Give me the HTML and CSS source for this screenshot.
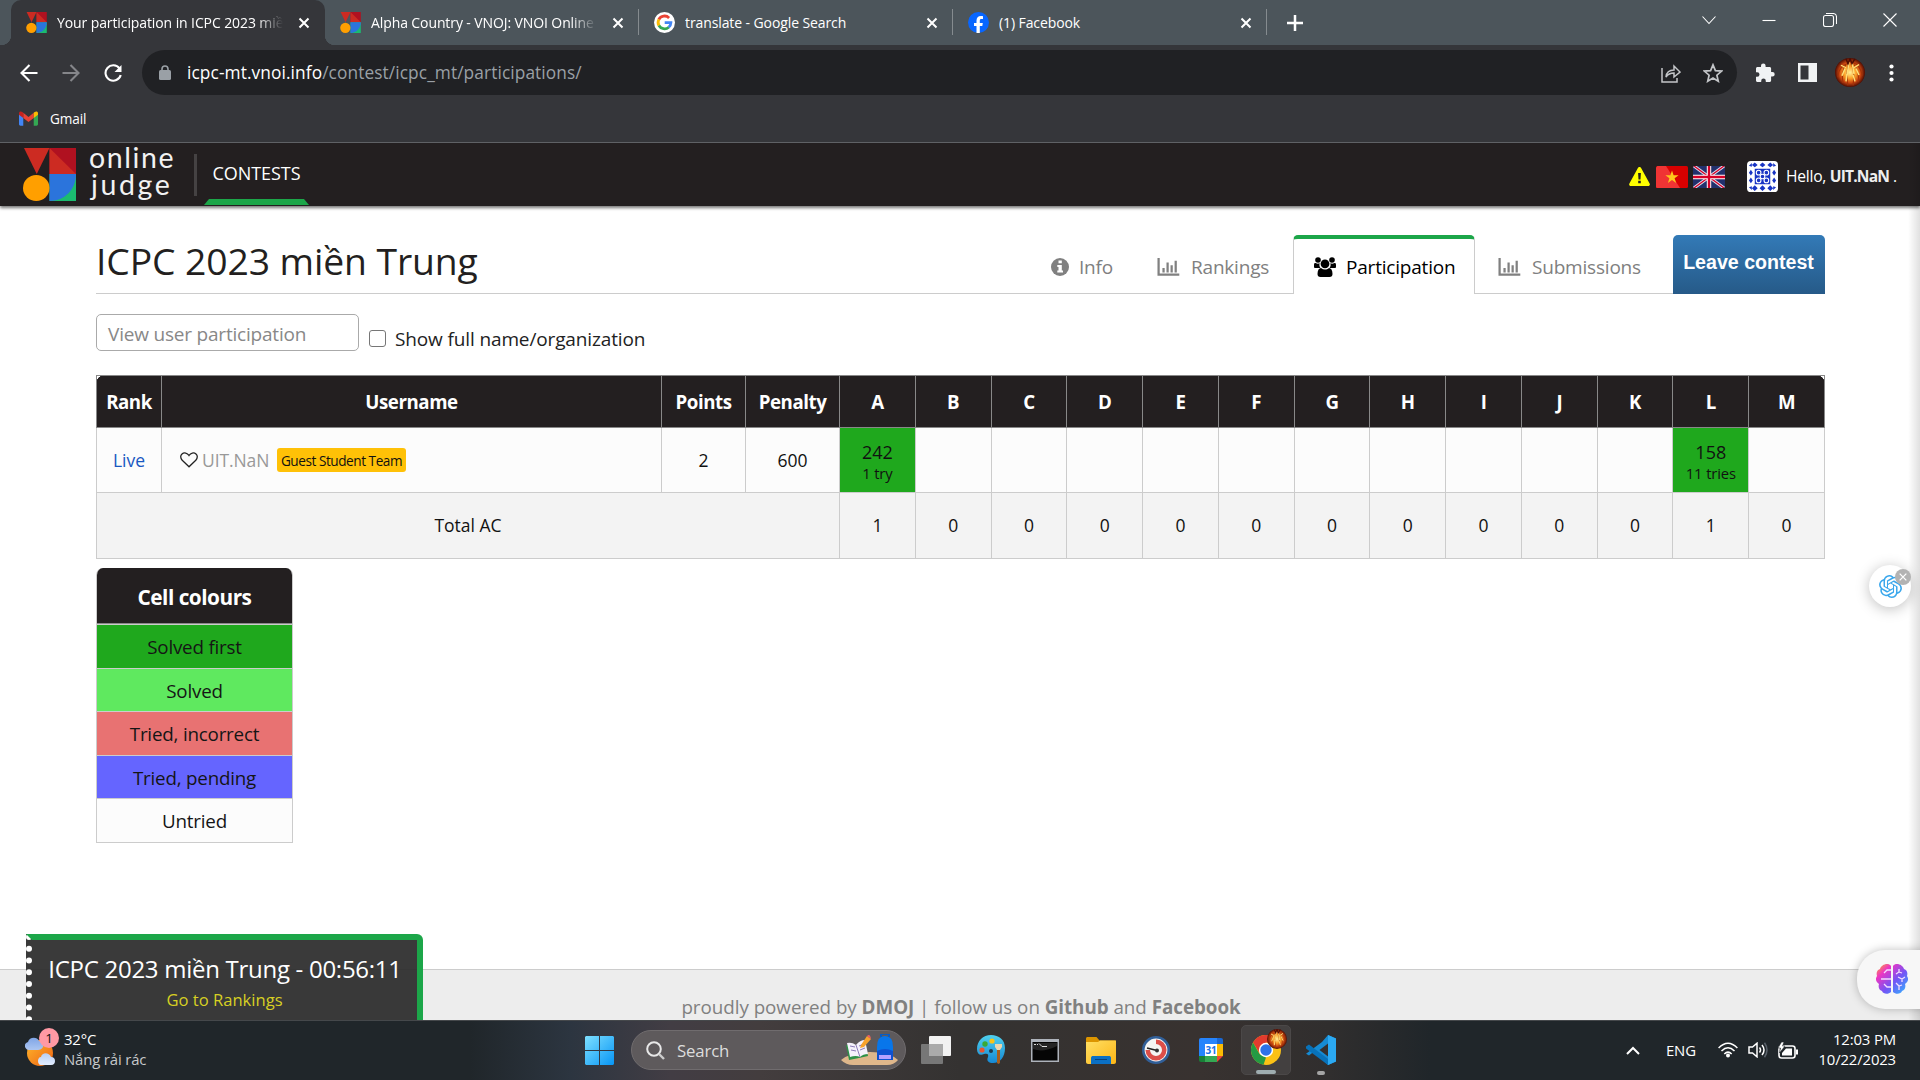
FILE: index.html
```html
<!DOCTYPE html>
<html lang="en">
<head>
<meta charset="utf-8">
<title>Your participation in ICPC 2023 miền Trung</title>
<link rel="stylesheet" href="styles.css">
</head>
<body>
<svg width="0" height="0" class="defs">
  <defs>
    <symbol id="vnoj" viewBox="0 0 52 53"><path d="M1 0h25L13.500 26z" fill="#cc2b22"/><path d="M26 0h26v26H26z" fill="#b01120"/><path d="M26 0l26 26H26z" fill="#cc2b22"/><path d="M26 26h26v27H26z" fill="#1bbb70"/><path d="M26 26h26c0 15-11 27-26 27z" fill="#2b74dc"/><circle cx="13" cy="40" r="13" fill="#ff9f00"/></symbol>
    <symbol id="close" viewBox="0 0 12 12"><path d="M1.500 1.500l9 9m0-9l-9 9" stroke="currentColor" stroke-width="2"/></symbol>
    <symbol id="bars" viewBox="0 0 24 20"><path d="M1 0v18.500h23M6.500 16v-5M11 16V5m4.500 11V8M20 16V3" fill="none" stroke="currentColor" stroke-width="2.500"/></symbol>
    <radialGradient id="fire"><stop offset="0" stop-color="#fff09a"/><stop offset=".4" stop-color="#fca329"/><stop offset=".72" stop-color="#c94510"/><stop offset="1" stop-color="#4e0d03"/></radialGradient>
    <symbol id="flame" viewBox="0 0 30 36"><ellipse cx="15" cy="18" rx="15" ry="18" fill="url(#fire)"/><path d="M14 6Q3 10 3 24M11 8Q6 17 8 31M13 10q-2 12 0 24M17 9q3 12 1 25M19 8q6 10 4 22M17 5q9 4 10 17" fill="none" stroke="#a33409" stroke-width="1.100"/><path d="M6 9l5 3m13-4l-5 4M14 5l-2 17M17 5l2 15M10 13l-3 9m14-9l3 8M12 20l-1 9m7-8l2 8" fill="none" stroke="#ffe078" stroke-width="1.500"/><path d="M11 1l2 6 2-6 2 6 3-6" fill="none" stroke="#4e0d03" stroke-width="1.600"/></symbol>
    <linearGradient id="win" x2="1" y2="1"><stop stop-color="#7ee0ff"/><stop offset="1" stop-color="#0795f5"/></linearGradient>
    <linearGradient id="brain" x1="0" y1="0" x2="1" y2="1"><stop stop-color="#ffb11c"/><stop offset=".25" stop-color="#ed36c3"/><stop offset=".58" stop-color="#7454f5"/><stop offset="1" stop-color="#2dbdff"/></linearGradient>
    <linearGradient id="sun" x2="1" y2="1"><stop stop-color="#ffb92c"/><stop offset="1" stop-color="#ee6212"/></linearGradient>
    <linearGradient id="cloud" x2="0" y2="1"><stop stop-color="#7fa5e6"/><stop offset="1" stop-color="#e2edff"/></linearGradient>
    <linearGradient id="folder" x2="1" y2="1"><stop stop-color="#ffdf64"/><stop offset="1" stop-color="#fcb616"/></linearGradient>
    <linearGradient id="paint" x2="0" y2="1"><stop stop-color="#4fd0ed"/><stop offset="1" stop-color="#1689d4"/></linearGradient>
  </defs>
</svg>

<header class="tabstrip">
  <div class="tab tab-active"><svg class="favicon"><use href="#vnoj"/></svg><span class="tab-title fade">Your participation in ICPC 2023 miền</span><svg class="tab-close"><use href="#close"/></svg></div>
  <div class="tab"><svg class="favicon"><use href="#vnoj"/></svg><span class="tab-title fade">Alpha Country - VNOJ: VNOI Online</span><svg class="tab-close"><use href="#close"/></svg></div>
  <div class="tab"><svg class="favicon" viewBox="0 0 21 21"><circle cx="10.500" cy="10.500" r="10.500" fill="#fff"/><g fill="none" stroke-width="2.800"><path d="M4.800 7.500a6.500 6.500 0 0 1 10.300-1.600" stroke="#ea4335"/><path d="M4.900 7.400a6.500 6.500 0 0 0 0 6.200" stroke="#fbbc05"/><path d="M4.900 13.500a6.500 6.500 0 0 0 9.900 1.800" stroke="#34a853"/><path d="M14.700 15.300a6.500 6.500 0 0 0 2.200-4.600h-6.200" stroke="#4285f4"/></g></svg><span class="tab-title">translate - Google Search</span><svg class="tab-close"><use href="#close"/></svg></div>
  <div class="tab"><svg class="favicon" viewBox="0 0 21 21"><circle cx="10.500" cy="10.500" r="10.500" fill="#0866ff"/><path d="M8.500 21v-7H6v-3h2.500V8.800C8.500 5.600 10 4 13 4c.8 0 1.500.1 2 .2v2.900h-1.500c-1.300 0-1.700.6-1.700 1.800V11h3l-.5 3h-2.500v7z" fill="#fff"/></svg><span class="tab-title">(1) Facebook</span><svg class="tab-close"><use href="#close"/></svg></div>
  <svg class="new-tab" viewBox="0 0 16 16"><path d="M8 0v16M0 8h16" stroke="#fff" stroke-width="2.500"/></svg>
  <div class="window-buttons">
    <svg viewBox="0 0 14 14"><path d="M.5 3.500l6.500 7 6.500-7"/></svg>
    <svg viewBox="0 0 14 14"><path d="M.5 7.500h13"/></svg>
    <svg viewBox="0 0 14 14"><rect x=".5" y="2.500" width="10" height="11" rx="2"/><path d="M3 .5h7a3.500 3.500 0 0 1 3.500 3.500v7"/></svg>
    <svg viewBox="0 0 14 14"><path d="M.5.500l13 13m0-13l-13 13"/></svg>
  </div>
</header>

<div class="toolbar">
  <svg class="nav-icon" viewBox="0 0 18 18"><path d="M17.500 9H1.500M9.500 1L1.500 9l8 8"/></svg>
  <svg class="nav-icon dim" viewBox="0 0 18 18"><path d="M.5 9h16M8.500 1l8 8-8 8"/></svg>
  <svg class="nav-icon" viewBox="0 0 18 18"><path d="M15.500 4.500A7.700 7.700 0 1 0 16.700 11"/><path d="M17.500 1v7h-7z" fill="#fff" stroke="none"/></svg>
  <div class="omnibox">
    <svg class="lock" viewBox="0 0 12 15"><rect y="5" width="12" height="10" rx="1.500" fill="#9aa0a6"/><path d="M3 6V4a3 3 0 0 1 6 0v2" fill="none" stroke="#9aa0a6" stroke-width="1.600"/></svg>
    <span class="url"><b>icpc-mt.vnoi.info</b>/contest/icpc_mt/participations/</span>
    <svg class="omni-icon" viewBox="0 0 20 20"><path d="M1 5v14h15v-4M5 14c.5-5 3-7 8-7V3l6 6-6 5v-4c-4 0-6 1-8 4z"/></svg>
    <svg class="omni-icon" viewBox="0 0 20 20"><path d="M10 1.800l2.400 5.800 6.200.5-4.700 4.100 1.400 6.100-5.300-3.200-5.300 3.200 1.400-6.100L1.400 8.100l6.200-.5z" stroke-width="1.700"/></svg>
  </div>
  <svg class="ext" viewBox="0 0 20 20"><path d="M1 5.500C1 4.700 1.700 4 2.500 4H6V2.800a2.300 2.300 0 0 1 4.600 0V4h4c.8 0 1.500.7 1.500 1.500V9h1.300a2.300 2.300 0 0 1 0 4.600h-1.300v4c0 .8-.7 1.500-1.500 1.500h-3.800v-1.200a2.300 2.300 0 0 0-4.600 0V19H2.500c-.8 0-1.500-.7-1.500-1.500v-3.700h1.200a2.300 2.300 0 0 0 0-4.600H1z" fill="#f1f3f4"/></svg>
  <svg class="panel" viewBox="0 0 19 19"><path d="M0 0h19v19H0zM2.500 2.500v14h8v-14z" fill="#f1f3f4" fill-rule="evenodd"/></svg>
  <svg class="profile" preserveAspectRatio="none" viewBox="0 0 30 36"><use href="#flame" width="30" height="36"/></svg>
  <svg class="dots" viewBox="0 0 5 18"><g fill="#fff"><circle cx="2.500" cy="2.500" r="2.100"/><circle cx="2.500" cy="9" r="2.100"/><circle cx="2.500" cy="15.500" r="2.100"/></g></svg>
</div>

<div class="bookmarks">
  <svg viewBox="0 0 20 15"><path d="M0 3v10.500C0 14.300.7 15 1.500 15H4.500V6z" fill="#4285f4"/><path d="M20 3v10.500c0 .8-.7 1.500-1.500 1.500h-3V6z" fill="#34a853"/><path d="M4.500 7V1.500L10 5.800l5.500-4.300V7L10 11.300z" fill="#ea4335"/><path d="M0 3.500V2c0-2 2-2.500 3.500-1.400l1 .9V7z" fill="#c5221f"/><path d="M20 3.500V2c0-2-2-2.500-3.500-1.400l-1 .9V7z" fill="#fbbc04"/></svg>
  <span>Gmail</span>
</div>

<main class="page">
  <nav class="navbar">
    <svg class="logo" viewBox="0 0 52 53" preserveAspectRatio="none"><use href="#vnoj" width="52" height="53"/></svg>
    <div class="brand"><span>online</span><span class="brand-2">judge</span></div>
    <i class="divider"></i>
    <a class="nav-link"><span>CONTESTS</span></a>
    <div class="user-area">
      <svg class="warn" viewBox="0 0 21 19"><path d="M10.500 0c.8 0 1.300.5 1.600 1l8.500 15.500c.7 1.200-.1 2.500-1.400 2.500H1.800C.5 19-.3 17.700.4 16.500L8.900 1c.3-.5.8-1 1.600-1z" fill="#ff0"/><path d="M9.100 6h2.800l-.4 6.500h-2zM9.200 13.800h2.600v2.500H9.200z" fill="#231f20"/></svg>
      <svg class="flag" viewBox="0 0 32 22"><rect width="32" height="22" rx="1.500" fill="#d80000"/><path d="M1.500 0H10l14 22H1.500A1.500 1.500 0 0 1 0 20.500v-19z" fill="#f03434"/><path d="M16 4.500l1.600 4.700h5l-4 3 1.500 4.800-4.100-2.900-4.100 2.900 1.500-4.800-4-3h5z" fill="#ffc61a"/></svg>
      <svg class="flag" viewBox="0 0 32 22"><rect width="32" height="22" rx="1.500" fill="#22306c"/><path d="M1 0l30 22M31 0L1 22" stroke="#dcdfee" stroke-width="3.200"/><path d="M1 0l30 22M31 0L1 22" stroke="#d80027" stroke-width="1.300"/><path d="M16 0v22M0 11h32" stroke="#fff" stroke-width="4.400"/><path d="M16 0v22M0 11h32" stroke="#d80027" stroke-width="2.400"/></svg>
      <svg class="gravatar" viewBox="0 0 32 32"><rect width="32" height="32" rx="4" fill="#fff"/><g fill="#1834c4"><path d="M8 8h16v16H8z"/><path d="M5 4l3-2.500L11 4 8 6.500zM13 4l3-2.500L19 4l-3 2.500zM21 4l3-2.500L27 4l-3 2.500zM5 28l3 3 3-3-3-3zM13 28l3 3 3-3-3-3zM21 28l3 3 3-3-3-3zM4 9l2 3-2 3-2-3zM4 17l2 3-2 3-2-3zM28 9l2 3-2 3-2-3zM28 17l2 3-2 3-2-3z"/><path d="M2 5l3-3v4zM30 5l-3-3v4zM2 27l3 3v-4zM30 27l-3 3v-4z"/></g><g fill="#1834c4" stroke="#fff" stroke-width="1.100"><circle cx="12" cy="12" r="2.400"/><circle cx="20" cy="12" r="2.400"/><circle cx="16" cy="16" r="2.400"/><circle cx="12" cy="20" r="2.400"/><circle cx="20" cy="20" r="2.400"/></g></svg>
      <span class="hello">Hello, <b>UIT.NaN</b> .</span>
    </div>
  </nav>

  <section class="content">
    <div class="heading">
      <h1><span>ICPC 2023 miền Trung</span></h1>
      <div class="tabs">
        <a class="ptab p-info"><svg viewBox="0 0 18 18"><circle cx="9" cy="9" r="9" fill="currentColor"/><path d="M7.500 2.500h3.300v2.800H7.500zM6.300 7h4.500v5.500H12v2H6.300v-2h1.200V9H6.300z" fill="#fff"/></svg><span>Info</span></a>
        <a class="ptab p-rank"><svg class="bars"><use href="#bars"/></svg><span>Rankings</span></a>
        <a class="ptab p-part"><svg class="people" viewBox="0 0 22 20"><circle cx="4" cy="3" r="2.800"/><circle cx="18" cy="3" r="2.800"/><circle cx="11" cy="6.800" r="4.400"/><path d="M0 10V8c0-2 1-2.300 2-1.800 1.200.6 2.500.6 3.700 0C5 8 5.500 9.500 6.500 11H1.500C.5 11 0 10.600 0 10zM22 10V8c0-2-1-2.300-2-1.800-1.200.6-2.500.6-3.700 0 .7 1.800.2 3.300-.8 4.800h5c1 0 1.500-.4 1.500-1zM3.500 17c0-4 1.500-6 3.500-6 2.500 2 5.500 2 8 0 2 0 3.500 2 3.500 6 0 2-1 3-3 3h-9c-2 0-3-1-3-3z"/></svg><span>Participation</span></a>
        <a class="ptab p-sub"><svg class="bars"><use href="#bars"/></svg><span>Submissions</span></a>
        <button class="leave"><span>Leave contest</span></button>
      </div>
    </div>

    <div class="filters">
      <div class="search-user"><span>View user participation</span></div>
      <i class="checkbox"></i>
      <label>Show full name/organization</label>
    </div>

    <table class="ranking">
      <colgroup><col class="c-rank"><col class="c-user"><col class="c-points"><col class="c-penalty"><col span="13"></colgroup>
      <thead><tr><th>Rank</th><th>Username</th><th>Points</th><th>Penalty</th><th>A</th><th>B</th><th>C</th><th>D</th><th>E</th><th>F</th><th>G</th><th>H</th><th>I</th><th>J</th><th>K</th><th>L</th><th>M</th></tr></thead>
      <tbody>
        <tr class="row"><td class="live">Live</td><td><div class="user"><svg viewBox="0 0 18 16"><path d="M9 14.800L2.200 8.200C.2 6.200.3 3.300 2 1.900 4.200.1 7.300.9 9 3.500 10.700.9 13.800.1 16 1.900c1.700 1.400 1.800 4.300-.2 6.300z" fill="none" stroke="#222" stroke-width="1.300"/></svg><span class="name">UIT.NaN</span><span class="badge">Guest Student Team</span></div></td><td>2</td><td>600</td><td class="first">242<small>1 try</small></td><td></td><td></td><td></td><td></td><td></td><td></td><td></td><td></td><td></td><td></td><td class="first">158<small>11 tries</small></td><td></td></tr>
        <tr class="total"><td colspan="4">Total AC</td><td>1</td><td>0</td><td>0</td><td>0</td><td>0</td><td>0</td><td>0</td><td>0</td><td>0</td><td>0</td><td>0</td><td>1</td><td>0</td></tr>
      </tbody>
    </table>

    <div class="legend">
      <div class="legend-head">Cell colours</div>
      <div class="s-first">Solved first</div>
      <div class="s-solved">Solved</div>
      <div class="s-wrong">Tried, incorrect</div>
      <div class="s-pending">Tried, pending</div>
      <div class="s-none">Untried</div>
    </div>
  </section>

  <footer><span>proudly powered by <b>DMOJ</b> | follow us on <b>Github</b> and <b>Facebook</b></span></footer>

  <i class="edge-shadow"></i>
  <aside class="clock"><span class="clock-title">ICPC 2023 miền Trung - 00:56:11</span><span class="clock-link">Go to Rankings</span></aside>
  <div class="gpt">
    <svg viewBox="0 0 24 24"><path fill="#3aa7ec" d="M22.282 9.821a5.985 5.985 0 0 0-.516-4.910 6.046 6.046 0 0 0-6.510-2.900A6.065 6.065 0 0 0 4.981 4.182a5.985 5.985 0 0 0-3.998 2.900 6.046 6.046 0 0 0 .743 7.097 5.980 5.980 0 0 0 .511 4.911 6.051 6.051 0 0 0 6.515 2.900A5.985 5.985 0 0 0 13.260 24a6.056 6.056 0 0 0 5.772-4.206 5.990 5.990 0 0 0 3.998-2.900 6.056 6.056 0 0 0-.748-7.073zM13.260 22.430a4.476 4.476 0 0 1-2.876-1.041l.141-.080 4.779-2.758a.795.795 0 0 0 .393-.681v-6.737l2.020 1.168a.071.071 0 0 1 .038.052v5.583a4.504 4.504 0 0 1-4.495 4.494zM3.600 18.304a4.471 4.471 0 0 1-.535-3.014l.142.085 4.783 2.759a.771.771 0 0 0 .781 0l5.843-3.369v2.332a.080.080 0 0 1-.033.062L9.740 19.950a4.499 4.499 0 0 1-6.140-1.646zM2.341 7.896a4.485 4.485 0 0 1 2.366-1.973V11.600a.766.766 0 0 0 .388.677l5.814 3.354-2.020 1.168a.076.076 0 0 1-.071 0l-4.830-2.786A4.504 4.504 0 0 1 2.341 7.896zm16.596 3.856l-5.833-3.387L15.119 7.200a.076.076 0 0 1 .071 0l4.830 2.791a4.494 4.494 0 0 1-.676 8.105v-5.678a.790.790 0 0 0-.407-.667zm2.011-3.024l-.142-.085-4.774-2.782a.776.776 0 0 0-.785 0L9.409 9.230V6.897a.066.066 0 0 1 .028-.061l4.830-2.787a4.499 4.499 0 0 1 6.681 4.660zM8.307 12.863l-2.020-1.164a.080.080 0 0 1-.038-.057V6.075a4.499 4.499 0 0 1 7.376-3.454l-.142.081-4.779 2.758a.795.795 0 0 0-.393.681zm1.097-2.366l2.602-1.500 2.607 1.500v2.999l-2.597 1.500-2.607-1.500z"/></svg>
    <i class="gpt-close"><svg viewBox="0 0 12 12"><path d="M2 2l8 8m0-8l-8 8" stroke="#fff" stroke-width="1.500"/></svg></i>
  </div>
  <div class="brain"><svg viewBox="0 0 32 30"><path d="M15 2v26c-3 3-8 2-9-1-3-1-4-4-3-7-3-2-4-5-2-8-1-3 0-6 3-7C5 1 12-2 15 2zM17 2v26c3 3 8 2 9-1 3-1 4-4 3-7 3-2 4-5 2-8 1-3 0-6-3-7C27 1 20-2 17 2z" fill="url(#brain)"/><path d="M15 6h-4L8 9M15 15H5M15 23h-4l-3-3M20 10l3-2V5m0 3l3 1M22 13l4 2 3-2m-3 2v3M20 19l3 3 3-1m-3 1v4" fill="none" stroke="#f3dcff" stroke-width="1.300"/></svg></div>
</main>

<div class="taskbar">
  <div class="weather">
    <svg viewBox="0 0 36 36"><circle cx="15" cy="21" r="13" fill="url(#sun)"/><path d="M0 15a4 4 0 0 1 3-5c1-5 9-6 11-1 4 0 5 3 4 6-1 2-3 3-5 3H4c-2 0-3-1-4-3zM13 29c0-2 1-4 3-4 1-5 8-5 10 0 3 0 4 2 4 4s-1 4-4 4H16c-2 0-3-2-3-4z" fill="url(#cloud)"/></svg>
    <span class="count">1</span>
    <div><span class="temp">32°C</span><span class="sky">Nắng rải rác</span></div>
  </div>

  <div class="apps">
    <svg class="i-win" viewBox="0 0 29 29"><path d="M1 0h13v14H0V1zM15 0h13l1 1v13H15zM0 15h14v14H1l-1-1zM15 15h14v13l-1 1H15z" fill="url(#win)"/></svg>
    <div class="search">
      <svg class="glass" viewBox="0 0 19 19"><circle cx="8" cy="8" r="6.800" fill="none" stroke="#e8e8e8" stroke-width="2"/><path d="M13 13l5 5" stroke="#ccc" stroke-width="2.400"/></svg><span>Search</span>
      <svg class="art" viewBox="0 0 57 32"><path d="M0 26q10-8 29-8t28 8q-4 5-11 5H12Q5 31 0 26z" fill="#dfb78b"/><path d="M5 11l10 1 9-4 3 14-9 2-10 2z" fill="#2d9147"/><path d="M6 9q5-1 9 2 4-5 9-5l3 14q-5 0-8 3-4-2-10 0z" fill="#f4f1fb"/><path d="M15 11l4 12M9 12l5 1m-4 3l5 1m3-5l5-2m-4 6l5-2" stroke="#8c7cb8" fill="none"/><path d="M20 11l6-9 4 3-7 8-4 1z" fill="#f8a32c"/><path d="M26 2q3-3 4 3z" fill="#f05f62"/><path d="M36 13q0-11 8-11t8 11v12H36z" fill="#0876ea"/><path d="M40 3V0h8v3" fill="none" stroke="#075cc4" stroke-width="2"/><path d="M36 17q8-4 16 0v9H36z" fill="#1052d0"/><path d="M38 21h12v4H38z" fill="#b7a0ff"/></svg>
    </div>
    <svg class="i-view" viewBox="0 0 30 28"><rect x="8" width="22" height="20" rx="1" fill="#f2f2f2"/><rect y="8" width="22" height="20" rx="1" fill="#777"/><path d="M8 8h14v12H8z" fill="#aaa"/></svg>
    <svg class="i-paint" viewBox="0 0 28 30"><path d="M14 0c8 0 14 5 14 13 0 9-5 15-12 15-4 0-7-2-5-6 1-3-1-4-4-3-4 2-7 0-7-5C0 6 6 0 14 0z" fill="url(#paint)"/><circle cx="5" cy="15" r="2.600" fill="#e85430"/><circle cx="8" cy="9" r="2.700" fill="#39a935"/><circle cx="15" cy="6" r="2.600" fill="#f9c315"/><circle cx="14" cy="16" r="2" fill="#203c50"/><path d="M18 9h7v3l-2 3h-3l-2-3z" fill="#ecd5ad"/><path d="M20 15h3v13l-1.500 1-1.500-1z" fill="#a65e1e"/></svg>
    <svg class="i-cmd" viewBox="0 0 28 23"><path d="M0 0h28v23H0z" fill="#aeb3bb"/><path d="M1.500 3h25v18.500h-25z" fill="#050505"/><path d="M2 10q10 4 24-3V4H2z" fill="#242424"/><path d="M3 5.500h2m1 0h1m1-1l3 3h5" fill="none" stroke="#ddd"/></svg>
    <svg class="i-folder" viewBox="0 0 30 27"><path d="M0 8V1.500C0 .7.700 0 1.500 0h9l3 3.500h15c.8 0 1.500.7 1.500 1.500v5z" fill="#dc9500"/><path d="M0 5h12l2-1.500h16V25c0 1-1 2-2 2H2c-1 0-2-1-2-2z" fill="url(#folder)"/><path d="M5 27v-6c0-1.500 1-2 2-2h16c1 0 2 .5 2 2v6z" fill="#0b70c4"/><path d="M9 22.500h12" stroke="#07427e"/></svg>
    <svg class="i-timer" viewBox="0 0 28 28"><circle cx="14" cy="14" r="12.700" fill="#f5f5f3" stroke="#315f98" stroke-width="2.600"/><path d="M14 3.500A10.500 10.500 0 1 1 3.500 14H8a6 6 0 1 0 6-6z" fill="#dc4e49"/><path d="M5 12l10 2.500" stroke="#222" stroke-width="1.500"/><circle cx="15" cy="14.500" r="2" fill="#333"/></svg>
    <svg class="i-cal" viewBox="0 0 24 24"><path d="M0 2q0-2 2-2h16v6H6v12H0z" fill="#2684fc"/><path d="M18 0h4q2 0 2 2v4h-6z" fill="#1967d2"/><path d="M18 6h6v12h-6z" fill="#fbbc04"/><path d="M6 18h12v6H6z" fill="#34a853"/><path d="M0 18h6v6H2q-2 0-2-2z" fill="#188038"/><path d="M18 18h6l-6 6z" fill="#ea4335"/><path d="M6 6h12v12H6z" fill="#fff"/><text x="12" y="15.700" text-anchor="middle" class="cal-text">31</text></svg>
    <div class="chrome">
      <svg viewBox="0 0 30 30"><circle cx="15" cy="15" r="15" fill="#fbc116"/><path d="M2 7.500A15 15 0 0 1 28 7.500H15L9 19z" fill="#e33b2e"/><path d="M2 7.500L8.500 19 15 22.500 12.500 29.800A15 15 0 0 1 2 7.500z" fill="#249a44"/><circle cx="15" cy="15" r="7.200" fill="#fff"/><circle cx="15" cy="15" r="5.700" fill="#2d72e8"/></svg>
      <svg class="chrome-user" viewBox="0 0 30 36" preserveAspectRatio="none"><use href="#flame" width="30" height="36"/></svg>
      <i></i>
    </div>
    <div class="code">
      <svg viewBox="0 0 30 30"><path d="M22 0l8 3.500v23L22 30 8 16.500 3 20.500l-3-1.700L16 7z" fill="#168bd3"/><path d="M0 11.500l3-2L22 24v6L0 13.500z" fill="#0872b9"/><path d="M22 0l8 3.500v23L22 30z" fill="#2ba9f2"/><path d="M22 8.500v13L13.500 15z" fill="#343130"/></svg>
      <i></i>
    </div>
  </div>

  <div class="tray">
    <svg class="t-up" viewBox="0 0 14 9"><path d="M1 8l6-6 6 6" fill="none" stroke="#fff" stroke-width="2"/></svg>
    <span class="lang">ENG</span>
    <svg class="t-wifi" viewBox="0 0 20 16"><g fill="none" stroke="#fff" stroke-width="1.500"><path d="M.6 6Q10-3.500 19.400 6M3.500 9Q10 2.500 16.500 9M6.300 12Q10 8.300 13.700 12"/></g><circle cx="10" cy="13.600" r="2" fill="#fff"/></svg>
    <svg class="t-vol" viewBox="0 0 20 16"><g fill="none" stroke="#fff" stroke-width="1.500"><path d="M1 5h3.500L9 1.200v13.600L4.500 11H1zM11.500 5.500q2 2.500 0 5M14 3q4 5 0 10"/><path d="M16.500.8q5 7.200 0 14.400" stroke="#59616a"/></g></svg>
    <svg class="t-bat" viewBox="0 0 20 17"><rect x="1" y="4" width="16" height="12" rx="2.500" fill="none" stroke="#fff" stroke-width="1.600"/><path d="M18 7.500h2v5h-2zM4 13.500V11l4-4.500h6v7z" fill="#fff"/><path d="M3.500 0L0 6h2.500L1.500 11 7 4H4.500L6 0z" fill="#fff" stroke="#20262a" stroke-width=".6"/></svg>
    <div class="time"><span>12:03 PM</span><span>10/22/2023</span></div>
  </div>
</div>
</body>
</html>
```

FILE: styles.css
```css
* { box-sizing: border-box; }
body {
  margin: 0; width: 1920px; height: 1080px; overflow: hidden;
  display: flex; flex-direction: column;
  font-family: "Open Sans", "Noto Sans", sans-serif; color: #231f20; background: #fff;
}
svg { display: block; flex: none; }
.defs { position: absolute; }
span, label { white-space: nowrap; }

/* browser chrome */
.tabstrip { height: 45px; flex: none; display: flex; align-items: center; background: #4c555b; padding-left: 11px; }
.tab { width: 314px; height: 45px; display: flex; align-items: center; padding: 0 15px; flex: none; color: #fff; font-size: 14px; letter-spacing: -.1px; position: relative; }
.tab-active { background: #35363a; border-radius: 10px 10px 0 0; }
.tab-active::before, .tab-active::after { content: ""; position: absolute; bottom: 0; width: 10px; height: 10px; }
.tab-active::before { left: -10px; background: radial-gradient(circle at 0 0, transparent 10px, #35363a 10.5px); }
.tab-active::after { right: -10px; background: radial-gradient(circle at 100% 0, transparent 10px, #35363a 10.5px); }
.tab:not(.tab-active)::after { content: ""; position: absolute; right: 0; top: 9px; width: 1.5px; height: 26px; background: #858b8f; }
.favicon { width: 21px; height: 21px; margin-right: 10px; }
.tab-title { width: 226px; overflow: hidden; margin-right: 15px; padding-bottom: 1px; }
.fade { -webkit-mask-image: linear-gradient(90deg, #000 200px, transparent 226px); mask-image: linear-gradient(90deg, #000 200px, transparent 226px); }
.tab-close { width: 12px; height: 12px; }
.new-tab { width: 16px; height: 16px; margin-left: 20px; }
.window-buttons { margin-left: auto; display: flex; gap: 46.500px; padding: 0 23px 5px 0; }
.window-buttons svg { width: 14px; height: 14px; fill: none; stroke: #fff; stroke-width: 1.100; }

.toolbar { height: 55px; flex: none; display: flex; align-items: center; background: #35363a; padding-left: 20px; }
.nav-icon { width: 18px; height: 18px; margin-right: 24px; fill: none; stroke: #fff; stroke-width: 2.100; }
.nav-icon.dim { stroke: #85868a; }
.omnibox { width: 1595px; height: 45px; margin-left: -4px; border-radius: 23px; background: #202124; display: flex; align-items: center; padding: 0 14px 0 17px; }
.lock { width: 12px; height: 15px; margin-right: 16px; }
.url { font-size: 17.300px; color: #9aa0a6; margin-right: auto; letter-spacing: .1px; }
.url b { color: #fff; font-weight: 400; }
.omni-icon { width: 20px; height: 20px; margin-left: 22px; fill: none; stroke: #c3c5c8; stroke-width: 1.500; }
.ext { width: 20px; height: 20px; margin-left: 18px; }
.panel { width: 19px; height: 19px; margin-left: 23px; }
.profile { width: 30px; height: 29px; margin-left: 18px; }
.dots { width: 5px; height: 18px; margin-left: 24px; }

.bookmarks { height: 43px; flex: none; background: #35363a; border-bottom: 1px solid #5f6165; display: flex; align-items: center; gap: 12px; padding: 0 0 5px 19px; color: #fff; font-size: 13.600px; letter-spacing: -.1px; }
.bookmarks svg { width: 19px; height: 15px; }

/* site */
.page { height: 877px; flex: none; position: relative; overflow: hidden; display: flex; flex-direction: column; }
.navbar { height: 63px; flex: none; background: #231f20; display: flex; align-items: center; padding-left: 23px; box-shadow: 0 2px 3px #777; }
.logo { width: 53px; height: 53px; margin-top: -1px; }
.brand { display: flex; flex-direction: column; margin-left: 13px; width: 90px; font: 400 28.500px/27px Lato, sans-serif; color: #f2f2f2; letter-spacing: 1.600px; padding-bottom: 8px; }
.brand-2 { padding-left: 2px; letter-spacing: 2.600px; }
.divider { width: 3px; height: 42px; background: #454243; margin-left: 15px; }
.nav-link { width: 105px; height: 63px; margin-left: 7px; color: #fff; font-size: 18px; letter-spacing: -.05px; line-height: 24px; display: flex; flex-direction: column; align-items: center; justify-content: space-between; padding-top: 18px; }
.nav-link::after { content: ""; width: 105px; height: 6px; background: #1ca649; clip-path: polygon(5px 0, 100px 0, 100% 100%, 0 100%); margin-bottom: 1px; }
.user-area { margin-left: auto; display: flex; align-items: center; padding: 4px 24px 0 0; color: #fff; font-size: 15.600px; }
.warn { width: 21px; height: 19px; margin-right: 6px; }
.flag { width: 32px; height: 22px; margin-right: 5px; }
.gravatar { width: 31px; height: 31px; margin: 0 8px 0 17px; }
.hello { letter-spacing: -.25px; width: 110px; padding-bottom: 1px; }
.hello b { letter-spacing: -.850px; color: #eee; }

.content { width: 1729px; margin: 29px 0 0 96px; }
.heading { height: 59px; border-bottom: 1px solid #ccc; display: flex; justify-content: space-between; }
h1 { margin: 0; font-size: 37.300px; line-height: 51px; font-weight: 400; letter-spacing: -.1px; }
.tabs { display: flex; height: 59px; }
.ptab { display: flex; align-items: center; color: #808080; font-size: 19px; letter-spacing: -.2px; padding: 4px 0 0 20px; }
.ptab svg { width: 18px; height: 18px; margin: 0 10px 0 0; }
.ptab svg.bars { width: 23px; height: 18px; margin-right: 11px; }
.ptab svg.people { width: 22px; height: 20px; margin-right: 10px; }
.p-info { width: 106px; padding-left: 0; }
.p-rank { width: 136px; padding-left: 0; }
.p-part { width: 182px; color: #000; background: #fff; border: 1px solid #ccc; border-top: 4px solid #1ca649; border-bottom: 0; border-radius: 5px 5px 0 0; padding-top: 0; }
.p-sub { width: 198px; padding-left: 23px; }
.leave { width: 152px; height: 59px; border: 0; border-radius: 5px 5px 0 0; background: linear-gradient(#337ab7, #265a88); color: #fff; padding: 0 1px 5px 0; font: 700 19.600px "Liberation Sans", sans-serif; }

.filters { display: flex; align-items: flex-start; padding-top: 20px; height: 81px; }
.search-user { width: 263px; height: 37px; border: 1px solid #aaa; border-radius: 5px; color: #888; font-size: 19px; letter-spacing: -.2px; line-height: 38px; padding-left: 11px; }
.checkbox { width: 17px; height: 17px; border: 1.500px solid #767676; border-radius: 3px; margin: 16px 9px 0 10px; }
label { font-size: 19px; letter-spacing: -.130px; line-height: 26px; margin-top: 12px; color: #222; }

.ranking { width: 1729px; border-collapse: collapse; table-layout: fixed; font-size: 17.500px; text-align: center; }
.c-rank { width: 65px; } .c-user { width: 500px; } .c-points { width: 84px; } .c-penalty { width: 94px; }
.ranking th { height: 52px; background: #231f20; color: #fff; border: 1px solid #888; font-size: 18.700px; letter-spacing: -.450px; font-weight: 700; padding: 0; }
.ranking th:first-child { background: radial-gradient(circle at 100% 100%, transparent 6px, #fff 6.500px) 0 0 / 6px 6px no-repeat #231f20; }
.ranking th:last-child { background: radial-gradient(circle at 0 100%, transparent 6px, #fff 6.500px) 100% 0 / 6px 6px no-repeat #231f20; }
.ranking td { padding: 0; border: 1px solid #ccc; color: #111; }
.row td { height: 65px; background: #fcfcfc; }
.row td.first { background: #1fa81d; line-height: 20px; padding-top: 5px; font-size: 18px; }
.first small { display: block; font-size: 14.800px; line-height: 22px; letter-spacing: -.150px; }
.total td { height: 66px; background: #f3f3f3; padding-bottom: 1px; }
.ranking .live { color: #1958c1; }
.user { display: flex; align-items: center; padding-left: 18px; }
.user svg { width: 18px; height: 16px; margin-right: 4px; }
.name { color: #999; width: 67px; letter-spacing: -.1px; }
.badge { margin-left: 8px; width: 129px; height: 24px; border-radius: 3px; background: #ffc107; font-size: 13.600px; letter-spacing: -.450px; line-height: 26px; text-align: center; }

.legend { width: 197px; margin-top: 9px; border: 1px solid #ccc; border-top: 0; border-radius: 7px 7px 0 0; text-align: center; font-size: 18.800px; letter-spacing: -.2px; overflow: hidden; color: #151515; }
.legend div { height: 43.600px; line-height: 44px; border-top: 1px solid #ccc; }
.legend .legend-head { height: 56px; line-height: 58px; background: #231f20; color: #fff; font-size: 20.800px; letter-spacing: -.500px; font-weight: 700; border: 0; border-bottom: 1px solid #888; }
.legend .s-first { background: #1fa81d; } .s-solved { background: #5fe95f; } .s-wrong { background: #e87272; } .s-pending { background: #6565ff; } .s-none { background: #fcfcfc; }

footer { margin-top: auto; height: 51px; border-top: 1px solid #ccc; background: #ededed; color: #808080; text-align: center; font-size: 18.800px; letter-spacing: -.03px; line-height: 74px; overflow: hidden; flex: none; padding-left: 2px; }

.edge-shadow { position: absolute; right: 0; top: 0; width: 12px; height: 877px; background: linear-gradient(90deg, transparent, rgba(0,0,0,.12)); }
.clock { position: absolute; left: 26px; top: 791px; width: 397px; height: 100px; border: 6px solid #1ca649; border-left: 6px dotted #fff; border-radius: 0 6px 0 0; background: rgba(43,43,43,.93); display: flex; flex-direction: column; align-items: center; color: #fff; padding: 11px 0 0; }
.clock-title { font-size: 24px; letter-spacing: -.280px; line-height: 36px; padding-left: 1px; }
.clock-link { font-size: 16.600px; line-height: 26px; color: #d7d023; }
.gpt { position: absolute; left: 1869px; top: 422px; width: 42px; height: 42px; border-radius: 50%; background: #fff; box-shadow: 0 2px 14px rgba(0,0,0,.25); display: flex; align-items: center; justify-content: center; }
.gpt > svg { width: 23px; height: 23px; }
.gpt-close { position: absolute; right: 0; top: 4px; width: 16px; height: 16px; border-radius: 50%; background: #b3b3b3; padding: 3px; }
.gpt-close svg { width: 10px; height: 10px; }
.brain { position: absolute; left: 1857px; top: 807px; width: 70px; height: 59px; border-radius: 28px 0 0 28px; background: #f7f7f7; box-shadow: 0 0 10px rgba(0,0,0,.25); padding: 14px 0 0 19px; }
.brain svg { width: 32px; height: 30px; }

/* taskbar */
.taskbar { height: 60px; flex: none; display: flex; align-items: center; position: relative; border-top: 1px solid #45484b; color: #fff; font-size: 14.900px; letter-spacing: -.15px; padding-bottom: 1px;
  background: linear-gradient(90deg, #20262a 0, #20262a 470px, #2c3540 570px, #423d44 670px, #433d3e 760px, #343231 960px, #383230 1200px, #302e2e 1330px, #20262a 1430px); }
.weather { display: flex; width: 585px; padding-left: 25px; position: relative; }
.weather > svg { width: 36px; height: 36px; margin-right: 3px; }
.count { position: absolute; left: 39px; top: -4px; width: 20px; height: 20px; border-radius: 50%; background: #ff99a4; color: #111; font-size: 13.500px; line-height: 20px; text-align: center; }
.weather div, .time { display: flex; flex-direction: column; line-height: 20px; }
.weather div { margin-top: -3px; }
.sky { color: #c7c9ca; }
.apps { display: flex; align-items: center; }
.i-win { width: 29px; height: 29px; margin-right: 17px; }
.search { width: 275px; height: 40px; border-radius: 20px; background: #5e5a5c; border: 1px solid #706c6e; display: flex; align-items: center; padding: 0 7px 0 14px; font-size: 16.800px; color: #ddd; margin-right: 15px; }
.glass { width: 19px; height: 19px; margin-right: 12px; }
.art { width: 57px; height: 32px; margin-left: auto; }
.i-view { width: 30px; height: 28px; margin-right: 26px; }
.i-paint { width: 28px; height: 30px; margin-right: 26px; }
.i-cmd { width: 28px; height: 23px; margin-right: 27px; }
.i-folder { width: 30px; height: 27px; margin-right: 26px; }
.i-timer { width: 28px; height: 28px; margin-right: 29px; }
.i-cal { width: 24px; height: 24px; margin-right: 18px; }
.cal-text { font: 700 10px "Open Sans", sans-serif; fill: #1a73e8; }
.chrome { width: 50px; height: 50px; border-radius: 5px; background: #434040; border: 1px solid #4b4848; padding: 9px; position: relative; margin-right: 15px; }
.chrome svg { width: 30px; height: 30px; }
.chrome .chrome-user { position: absolute; right: 3px; top: 3px; width: 20px; height: 20px; }
.chrome i, .code i { position: absolute; background: #9fadb0; height: 4px; border-radius: 2px; bottom: 0; left: 14px; width: 20px; }
.code { width: 30px; height: 50px; padding-top: 10px; position: relative; }
.code svg { width: 30px; height: 30px; }
.code i { left: 11px; width: 8px; background: #a5a5a5; }
.tray { margin-left: auto; display: flex; align-items: center; padding-right: 24px; }
.t-up { width: 14px; height: 9px; margin-right: 26px; }
.lang { width: 52px; padding-bottom: 1px; }
.t-wifi { width: 20px; height: 16px; margin-right: 10px; }
.t-vol { width: 20px; height: 16px; margin-right: 10px; }
.t-bat { width: 20px; height: 17px; margin-right: 20px; }
.time { text-align: right; width: 78px; align-items: flex-end; padding-bottom: 3px; }
```
